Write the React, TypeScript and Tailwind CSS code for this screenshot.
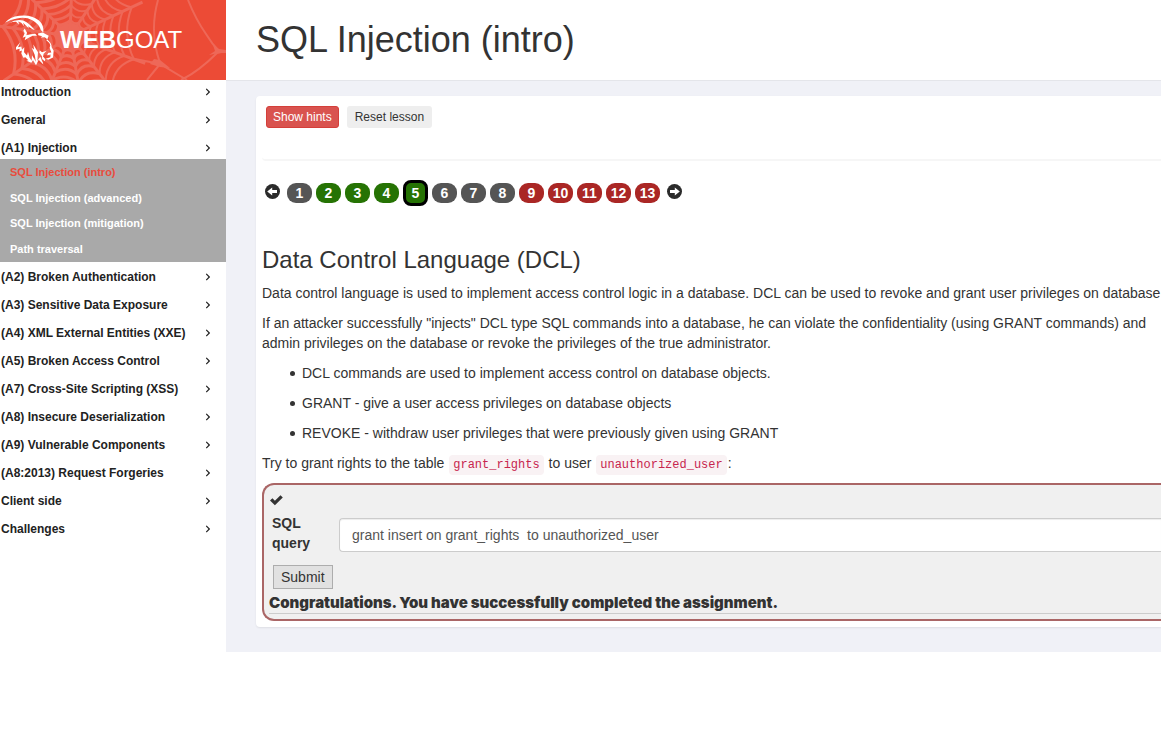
import { useState } from "react";
import { FaChevronRight } from "react-icons/fa";

interface MenuEntry {
  title: string;
  lessons?: string[];
}

const menu: MenuEntry[] = [
  { title: "Introduction" },
  { title: "General" },
  {
    title: "(A1) Injection",
    lessons: ["SQL Injection (intro)", "SQL Injection (advanced)", "SQL Injection (mitigation)", "Path traversal"],
  },
  { title: "(A2) Broken Authentication" },
  { title: "(A3) Sensitive Data Exposure" },
  { title: "(A4) XML External Entities (XXE)" },
  { title: "(A5) Broken Access Control" },
  { title: "(A7) Cross-Site Scripting (XSS)" },
  { title: "(A8) Insecure Deserialization" },
  { title: "(A9) Vulnerable Components" },
  { title: "(A8:2013) Request Forgeries" },
  { title: "Client side" },
  { title: "Challenges" },
];

const pageColors = {
  plain: "bg-[#555555]",
  solved: "bg-[#267304]",
  open: "bg-[#aa2725]",
};

const pages: (keyof typeof pageColors)[] = [
  "plain", "solved", "solved", "solved", "solved", "plain", "plain",
  "plain", "open", "open", "open", "open", "open",
];

// Spider web: spokes leave the centre, threads sag between neighbouring spokes
const CENTER = [70, 36];
const SPOKES = [-88, -56, -25, 20, 52, 80, 112, 146, 188, 224];
const RINGS = [16, 23, 31, 39, 48, 58, 68];

function point(angle: number, radius: number) {
  const rad = (angle * Math.PI) / 180;
  return `${(CENTER[0] + Math.cos(rad) * radius).toFixed(1)} ${(CENTER[1] + Math.sin(rad) * radius).toFixed(1)}`;
}

function Web() {
  return (
    <svg viewBox="0 0 226 80" className="absolute inset-0 h-full w-full" fill="none" stroke="#ee6858" aria-hidden="true">
      <circle cx={CENTER[0]} cy={CENTER[1]} r="13" fill="#ee6858" />
      {SPOKES.map((angle) => (
        <path key={angle} d={`M${CENTER.join(" ")} L${point(angle, 80)}`} strokeWidth="3" />
      ))}
      {RINGS.map((r) =>
        SPOKES.map((angle, i) => {
          const next = i + 1 < SPOKES.length ? SPOKES[i + 1] : SPOKES[0] + 360;
          return (
            <path
              key={`${r}-${angle}`}
              d={`M${point(angle, r)} Q${point((angle + next) / 2, r * 0.76)} ${point(next, r)}`}
              strokeWidth={i > 3 ? 3 : 2}
            />
          );
        })
      )}
      <path d="M158 0Q149 32 160 63M130 58L160 64L187 80M160 64L147 80M181 80Q198 72 217 53L226 51M188 0Q196 20 206 34Q212 44 219 51" strokeWidth="2" />
      <path d="M154 59L160 60L170 68L160 67L150 64ZM209 55L215 51L213 45L219 49L226 50V53L219 53Z" fill="#ee6858" stroke="none" />
    </svg>
  );
}

function Goat() {
  return (
    <svg viewBox="0 0 150 155" className="h-[52px] w-[50px]" fill="#ffffff" aria-hidden="true">
      <path d="M3 26Q18 8 46 5Q80 0 104 18Q120 31 118 55L111 48Q105 29 85 18Q64 7 39 13Q19 16 3 26Z" />
      <path d="M15 27Q35 14 58 19L69 25L79 33L92 47L87 46L72 36L75 44L65 33L57 26L61 37L51 25L43 22L45 31L36 23Q25 23 15 27Z" />
      <path d="M62 43L69 56L67 63L80 60L94 59L99 65L86 65L70 73L62 78L65 67L56 71L62 57L58 50Z" />
      <path d="M102 58L116 55L134 65L130 75L122 69L110 70L115 66L103 63Z" />
      <path d="M129 75Q144 87 143 99L149 110L147 130L133 137L125 134L139 129L140 121L129 123L133 116L142 115L137 101L139 93Q136 84 127 78Z" />
      <path d="M49 84L42 99L52 97L54 107L61 99L60 114L69 124L72 113L77 131L83 140L84 123L96 143L92 122L83 101L90 106L88 91L102 114L100 140L109 128L116 145L114 126L106 116L107 108L114 114L128 110L119 119L117 127L124 135L122 141L114 133L118 151L104 137L96 153L87 138L82 146L67 140L73 138L64 129L58 131L52 118L54 109L46 112L47 104L36 107L36 99Z" />
    </svg>
  );
}

function PageArrow({ back = false }: { back?: boolean }) {
  return (
    <button type="button" aria-label={back ? "Previous page" : "Next page"} className="mb-[3px] flex">
      <svg viewBox="0 0 15 15" className="h-[15px] w-[15px]" aria-hidden="true">
        <circle cx="7.5" cy="7.5" r="7.5" fill="#2b2b2b" />
        <path
          d={back ? "M2.2 7.5L7.2 3.4V6H12V9H7.2V11.6Z" : "M12.8 7.5L7.8 3.4V6H3V9H7.8V11.6Z"}
          fill="#ffffff"
        />
      </svg>
    </button>
  );
}

function Sidebar() {
  return (
    <aside className="w-[226px] shrink-0 bg-white">
      <a href="#home" className="relative flex h-20 items-center bg-[#ec4b36] text-white">
        <Web />
        <span className="relative flex items-center pl-1">
          <Goat />
          <span className="pl-[6px] text-[24px] leading-[30px]">
            <b>WEB</b>GOAT
          </span>
        </span>
      </a>
      <nav className="pt-[2px]">
        <ul>
          {menu.map((entry) => (
            <li key={entry.title} className={entry.lessons ? "mb-[5px]" : "mb-2"}>
              <button
                type="button"
                className="flex w-full items-center justify-between pr-[15px] pl-px text-[12px] leading-5 font-bold text-[#222222]"
              >
                {entry.title}
                <FaChevronRight className="h-[8px] w-[6px]" />
              </button>
              {entry.lessons && (
                <ul className="mt-px grid h-[103px] grid-rows-4 bg-[#a9a9a9]">
                  {entry.lessons.map((lesson, i) => (
                    <li key={lesson} className="flex items-center pl-[10px] text-[11px] font-bold">
                      <a href="#lesson" className={i === 0 ? "text-[#e84c3d]" : "text-white"}>
                        {lesson}
                      </a>
                    </li>
                  ))}
                </ul>
              )}
            </li>
          ))}
        </ul>
      </nav>
    </aside>
  );
}

function Bullet({ children }: { children: string }) {
  return (
    <li className="flex items-center pl-7 before:mr-[7px] before:size-[5px] before:rounded-full before:bg-[#333333]">
      {children}
    </li>
  );
}

function Code({ children }: { children: string }) {
  return (
    <code className="mx-px rounded-[4px] bg-[#f9f2f4] px-1 py-[3px] font-['Liberation_Mono',monospace] text-[12px] text-[#c7254e]">
      {children}
    </code>
  );
}

function Assignment() {
  const [query, setQuery] = useState("grant insert on grant_rights  to unauthorized_user");

  return (
    <form
      onSubmit={(e) => e.preventDefault()}
      className="rounded-l-[12px] border-y-2 border-l-2 border-[#aa6666] bg-[#f0f0f0] pt-2 pb-[5px] pl-[5px]"
    >
      <svg viewBox="0 0 13 14" className="ml-px h-[14px] w-[13px]" aria-hidden="true">
        <path d="M0 7.6L2.4 5.3L4.9 7.8L10.5 2.2L12.8 4.4L4.9 12.3Z" fill="#333333" />
      </svg>
      <div className="flex items-center pt-[6px] pl-[3px]">
        <label htmlFor="query" className="w-[67px] pr-4 font-bold">
          SQL query
        </label>
        <input
          id="query"
          value={query}
          onChange={(e) => setQuery(e.target.value)}
          className="mt-1 h-[34px] min-w-0 flex-1 rounded-l-[4px] border-y border-l border-[#cccccc] bg-white px-3 text-[#555555] shadow-[inset_0_1px_1px_rgba(0,0,0,0.075)]"
        />
      </div>
      <button type="submit" className="mt-3 ml-1 block h-6 border border-[#adadad] bg-[#e1e1e1] px-[7px]">
        Submit
      </button>
      <div className="mt-1 border-b border-[#cccccc] font-['Inter',sans-serif] text-[15px] leading-5 font-black">
        Congratulations. You have successfully completed the assignment.
      </div>
    </form>
  );
}

export default function App() {
  return (
    <div className="flex min-h-screen items-start overflow-hidden bg-white font-['Liberation_Sans',Arial,sans-serif] text-[14px] leading-5 text-[#333333]">
      <Sidebar />
      <div className="min-w-0 flex-1">
        <header className="flex h-[81px] items-center border-b border-[#e4e5ea] bg-white pl-[30px]">
          <h1 className="text-[36px] leading-10">SQL Injection (intro)</h1>
        </header>
        <main className="bg-[#f0f1f7] pt-[15px] pb-[25px] pl-[30px]">
          <section className="rounded-l-[4px] bg-white pt-[10px] pb-[6px] pl-[6px] shadow-[0_1px_2px_rgba(0,0,0,0.08)]">
            <div className="flex h-[55px] items-start gap-2 rounded-bl-[4px] border-b-2 border-[#f6f6f6] pl-1 text-[12px]">
              <button type="button" className="h-[22px] rounded-[3px] border border-[#d43f3a] bg-[#d9534f] px-[6px] text-white">
                Show hints
              </button>
              <button type="button" className="h-[22px] rounded-[3px] bg-[#eeeeee] px-2">
                Reset lesson
              </button>
            </div>

            <div className="mt-[19px] flex h-[26px] items-center gap-1 pl-[3px]">
              <div className="mr-[3px]">
                <PageArrow back />
              </div>
              {pages.map((state, i) => (
                <button
                  key={i}
                  type="button"
                  className={`flex w-[25px] items-center justify-center font-bold text-white ${pageColors[state]} ${
                    i === 4 ? "h-[26px] rounded-[8px] border-[3px] border-black" : "h-5 rounded-[9px]"
                  }`}
                >
                  {i + 1}
                </button>
              ))}
              <div className="ml-[3px]">
                <PageArrow />
              </div>
            </div>

            <h3 className="mt-10 text-[24px] leading-7">Data Control Language (DCL)</h3>
            <div className="flex flex-col gap-[10px] pt-[9px] pb-2 whitespace-nowrap">
              <p>
                Data control language is used to implement access control logic in a database. DCL can be used to revoke
                and grant user privileges on database
              </p>
              <p>
                If an attacker successfully "injects" DCL type SQL commands into a database, he can violate the
                confidentiality (using GRANT commands) and
                <br />
                admin privileges on the database or revoke the privileges of the true administrator.
              </p>
              <ul className="flex flex-col gap-[10px]">
                <Bullet>DCL commands are used to implement access control on database objects.</Bullet>
                <Bullet>GRANT - give a user access privileges on database objects</Bullet>
                <Bullet>REVOKE - withdraw user privileges that were previously given using GRANT</Bullet>
              </ul>
              <p>
                Try to grant rights to the table <Code>grant_rights</Code> to user <Code>unauthorized_user</Code>:
              </p>
            </div>
            <Assignment />
          </section>
        </main>
      </div>
    </div>
  );
}
